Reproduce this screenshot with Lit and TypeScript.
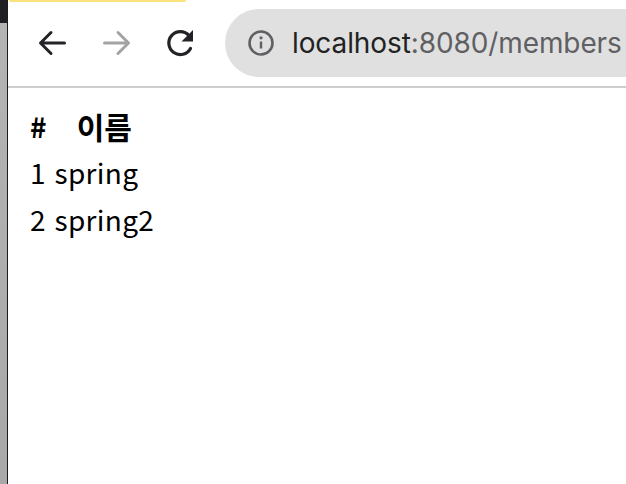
import { LitElement, html, css } from 'lit';
import { customElement } from 'lit/decorators.js';

@customElement('app-root')
export class AppRoot extends LitElement {
  static styles = css`
    :host {
      display: flex;
      width: 626px;
      height: 484px;
      overflow: hidden;
      background: #fff;
      font-family: 'Noto Sans CJK KR', 'Noto Sans', sans-serif;
      color: #000;
    }

    .edge {
      flex: none;
      width: 7px;
      display: flex;
      flex-direction: column;
      border-right: 1px solid #1c1c1e;
    }

    .edge-top {
      height: 23px;
      background: #1f1f24;
    }

    .edge-rest {
      flex: 1;
      background: linear-gradient(#b4b4b4, #a8a8a8);
    }

    .window {
      flex: 1;
      min-width: 0;
      display: flex;
      flex-direction: column;
    }

    .tab-glow {
      height: 2px;
      width: 177px;
      margin-left: 1px;
      background: #fbe27a;
      border-radius: 0 0 6px 6px;
    }

    .toolbar {
      flex: none;
      height: 86px;
      padding-bottom: 2px;
      box-sizing: border-box;
      display: flex;
      align-items: center;
      border-bottom: 2px solid #cdcdcd;
      overflow: hidden;
    }

    .nav {
      flex: none;
      display: flex;
      align-items: center;
      margin-left: 28px;
    }

    .nav svg {
      display: block;
      margin-right: 33px;
    }

    .nav svg.forward {
      margin-right: 32px;
    }

    .nav svg.reload {
      margin-right: 0;
    }

    .omnibox {
      flex: none;
      margin-left: 28px;
      width: 460px;
      height: 68px;
      box-sizing: border-box;
      border-radius: 34px;
      background: #e0e0e0;
      display: flex;
      align-items: center;
      padding-left: 22px;
      gap: 17px;
      font-family: Inter, 'Liberation Sans', sans-serif;
      font-size: 28px;
      letter-spacing: -0.1px;
      white-space: nowrap;
    }

    .host-name {
      color: #222;
    }

    .path {
      color: #5f6063;
    }

    table {
      align-self: flex-start;
      border-collapse: separate;
      border-spacing: 2px;
      margin: 14px 0 0 19px;
      font-size: 28px;
      line-height: 43px;
    }

    th,
    td {
      padding: 1px;
      text-align: left;
    }

    th {
      font-weight: 700;
      line-height: 42px;
    }

    th:first-child {
      padding-right: 5px;
    }

    th:last-child {
      text-align: center;
      font-size: 30px;
    }

    td:last-child {
      letter-spacing: 0.3px;
    }
  `;

  render() {
    return html`
      <div class="edge">
        <div class="edge-top"></div>
        <div class="edge-rest"></div>
      </div>
      <div class="window">
        <div class="tab-glow"></div>
        <div class="toolbar">
          <div class="nav">
            <svg width="32" height="32" viewBox="0 0 32 32" fill="none" stroke="#222326" stroke-width="3" stroke-linecap="round" stroke-linejoin="round">
              <path d="M28.5 16H6M15 5.5 4.5 16 15 26.5" />
            </svg>
            <svg class="forward" width="32" height="32" viewBox="0 0 32 32" fill="none" stroke="#a3a3a3" stroke-width="3" stroke-linecap="round" stroke-linejoin="round">
              <path d="M3.5 16H26M17 5.5 27.5 16 17 26.5" />
            </svg>
            <svg class="reload" width="32" height="32" viewBox="0 0 32 32" fill="none">
              <path d="M25.5 21.5A11.5 11.5 0 1 1 24 8.5" stroke="#222326" stroke-width="3.2" stroke-linecap="round" />
              <path d="M28 3v11.5H16.5z" fill="#222326" />
            </svg>
          </div>
          <div class="omnibox">
            <svg width="28" height="28" viewBox="0 0 28 28" fill="none">
              <circle cx="14" cy="14" r="11.5" stroke="#5f6063" stroke-width="2.6" />
              <path d="M14 12.5v7" stroke="#5f6063" stroke-width="2.4" />
              <circle cx="14" cy="8.8" r="1.6" fill="#5f6063" />
            </svg>
            <span><span class="host-name">localhost</span><span class="path">:8080/members</span></span>
          </div>
        </div>
        <table>
          <thead>
            <tr><th>#</th><th>이름</th></tr>
          </thead>
          <tbody>
            <tr><td>1</td><td>spring</td></tr>
            <tr><td>2</td><td>spring2</td></tr>
          </tbody>
        </table>
      </div>
    `;
  }
}
